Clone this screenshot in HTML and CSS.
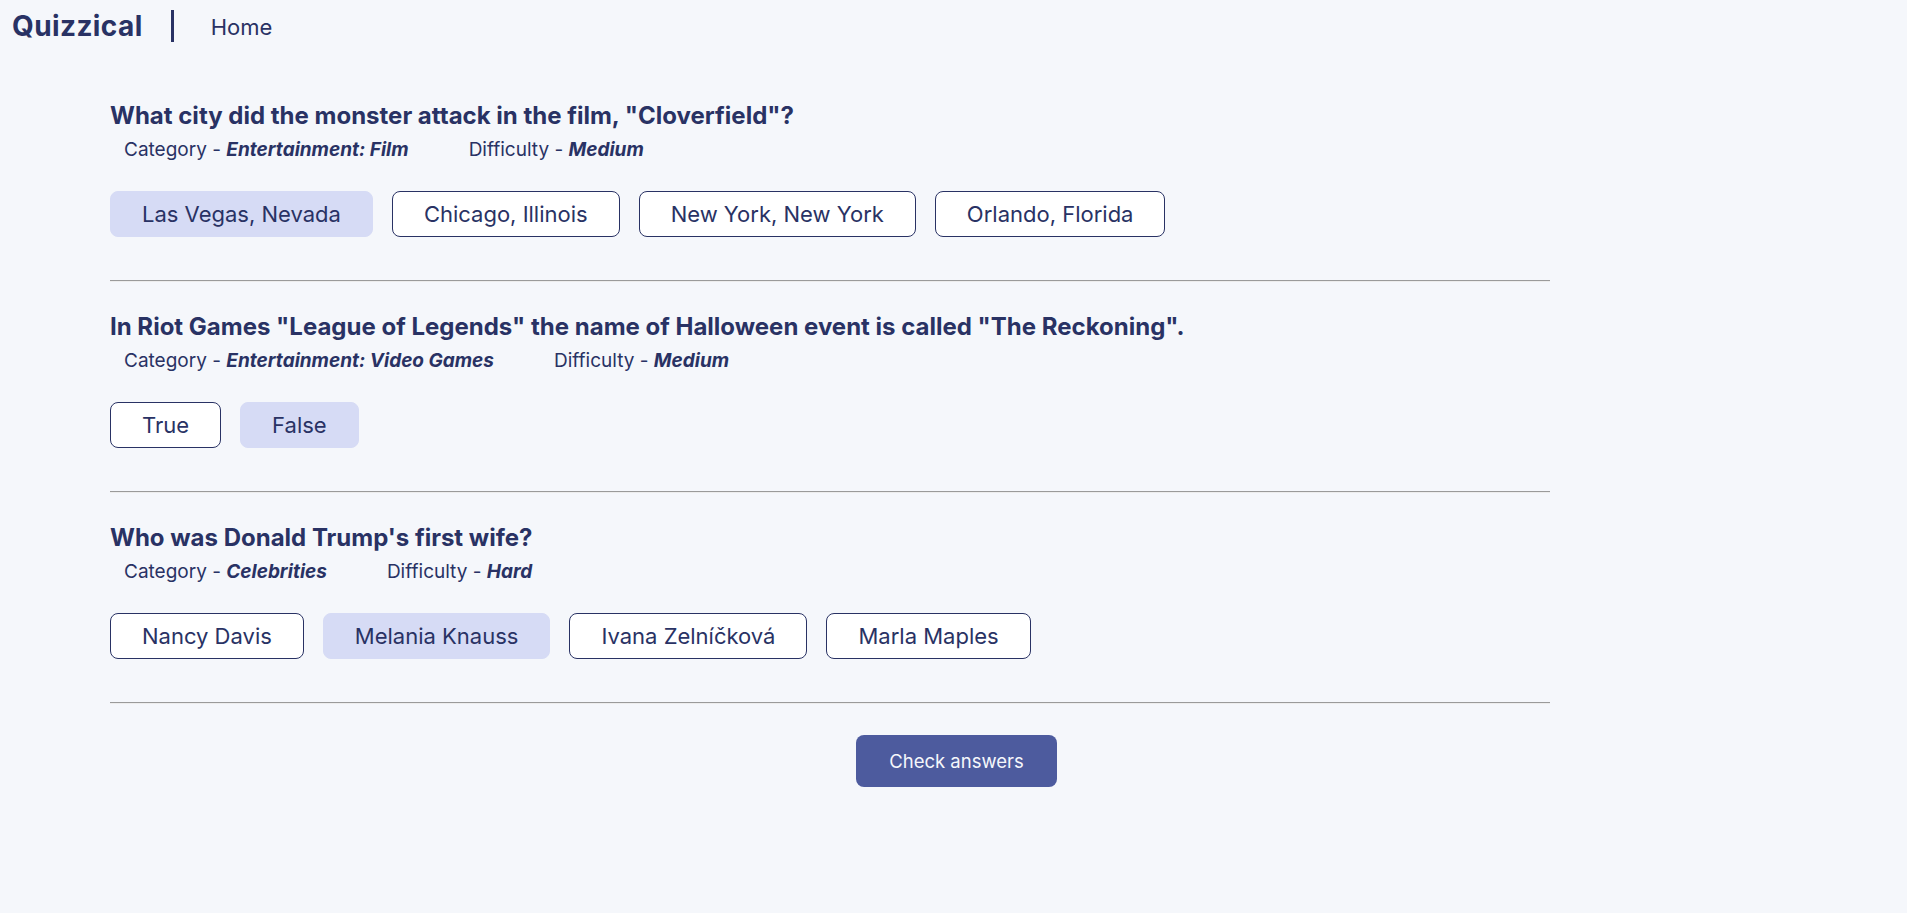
FILE: index.html
```html
<!DOCTYPE html>
<html lang="en">
<head>
<meta charset="utf-8">
<title>Quizzical</title>
<link rel="stylesheet" href="styles.css">
</head>
<body>
<header class="topbar">
  <span class="logo">Quizzical</span>
  <span class="divider"></span>
  <a class="nav-link" href="#">Home</a>
</header>
<main class="quiz">
  <section class="question">
    <h2 class="question-title">What city did the monster attack in the film, "Cloverfield"?</h2>
    <div class="meta">
      <span class="meta-item">Category - <b>Entertainment: Film</b></span>
      <span class="meta-item">Difficulty - <b>Medium</b></span>
    </div>
    <div class="answers">
      <button class="answer selected">Las Vegas, Nevada</button>
      <button class="answer">Chicago, Illinois</button>
      <button class="answer">New York, New York</button>
      <button class="answer">Orlando, Florida</button>
    </div>
  </section>
  <hr class="sep">
  <section class="question">
    <h2 class="question-title">In Riot Games "League of Legends" the name of Halloween event is called "The Reckoning".</h2>
    <div class="meta">
      <span class="meta-item">Category - <b>Entertainment: Video Games</b></span>
      <span class="meta-item">Difficulty - <b>Medium</b></span>
    </div>
    <div class="answers">
      <button class="answer">True</button>
      <button class="answer selected">False</button>
    </div>
  </section>
  <hr class="sep">
  <section class="question">
    <h2 class="question-title">Who was Donald Trump's first wife?</h2>
    <div class="meta">
      <span class="meta-item">Category - <b>Celebrities</b></span>
      <span class="meta-item">Difficulty - <b>Hard</b></span>
    </div>
    <div class="answers">
      <button class="answer">Nancy Davis</button>
      <button class="answer selected">Melania Knauss</button>
      <button class="answer">Ivana Zelníčková</button>
      <button class="answer">Marla Maples</button>
    </div>
  </section>
  <hr class="sep last">
</main>
<div class="actions">
  <button class="check-btn">Check answers</button>
</div>
</body>
</html>
```
FILE: styles.css
```css
* { box-sizing: border-box; }
html, body {
  margin: 0;
  background: #F5F7FB;
  color: #293264;
  font-family: Inter, "Liberation Sans", sans-serif;
}
.topbar {
  display: flex;
  align-items: center;
  height: 51px;
  padding-left: 12px;
}
.logo {
  font-size: 28px;
  font-weight: 700;
  letter-spacing: 0.4px;
}
.divider {
  width: 3px;
  height: 32px;
  background: #293264;
  margin-left: 28px;
  margin-right: 37px;
}
.nav-link {
  font-size: 22px;
  color: #293264;
  text-decoration: none;
  padding-top: 2px;
}
.quiz {
  width: 1440px;
  margin-left: 110px;
  padding-top: 52px;
}
.question-title {
  margin: 0;
  font-size: 24px;
  line-height: 26px;
  font-weight: 700;
}
.meta {
  display: flex;
  gap: 60px;
  margin-top: 11px;
  padding-left: 14px;
  font-size: 19px;
  line-height: 20px;
}
.meta b {
  font-style: italic;
  font-weight: 700;
}
.answers {
  display: flex;
  gap: 19px;
  margin-top: 31px;
}
.answer {
  height: 46px;
  padding: 0 31px;
  border: 1px solid #293264;
  border-radius: 8px;
  background: #FFFFFF;
  color: #293264;
  font-family: Inter, "Liberation Sans", sans-serif;
  font-size: 22px;
}
.answer.selected {
  background: #D6DBF5;
  border-color: #D6DBF5;
}
.sep {
  margin: 43px 0 32px;
  border: 0;
  border-top: 1px solid #9A9A9A;
  border-bottom: 1px solid #EDEDED;
}
.sep.last { margin-bottom: 31px; }
.actions {
  display: flex;
  justify-content: center;
  padding-left: 6px;
}
.check-btn {
  width: 201px;
  height: 52px;
  border: none;
  border-radius: 8px;
  background: #4D5B9E;
  color: #F5F7FB;
  font-family: Inter, "Liberation Sans", sans-serif;
  font-size: 18.5px;
}
```
